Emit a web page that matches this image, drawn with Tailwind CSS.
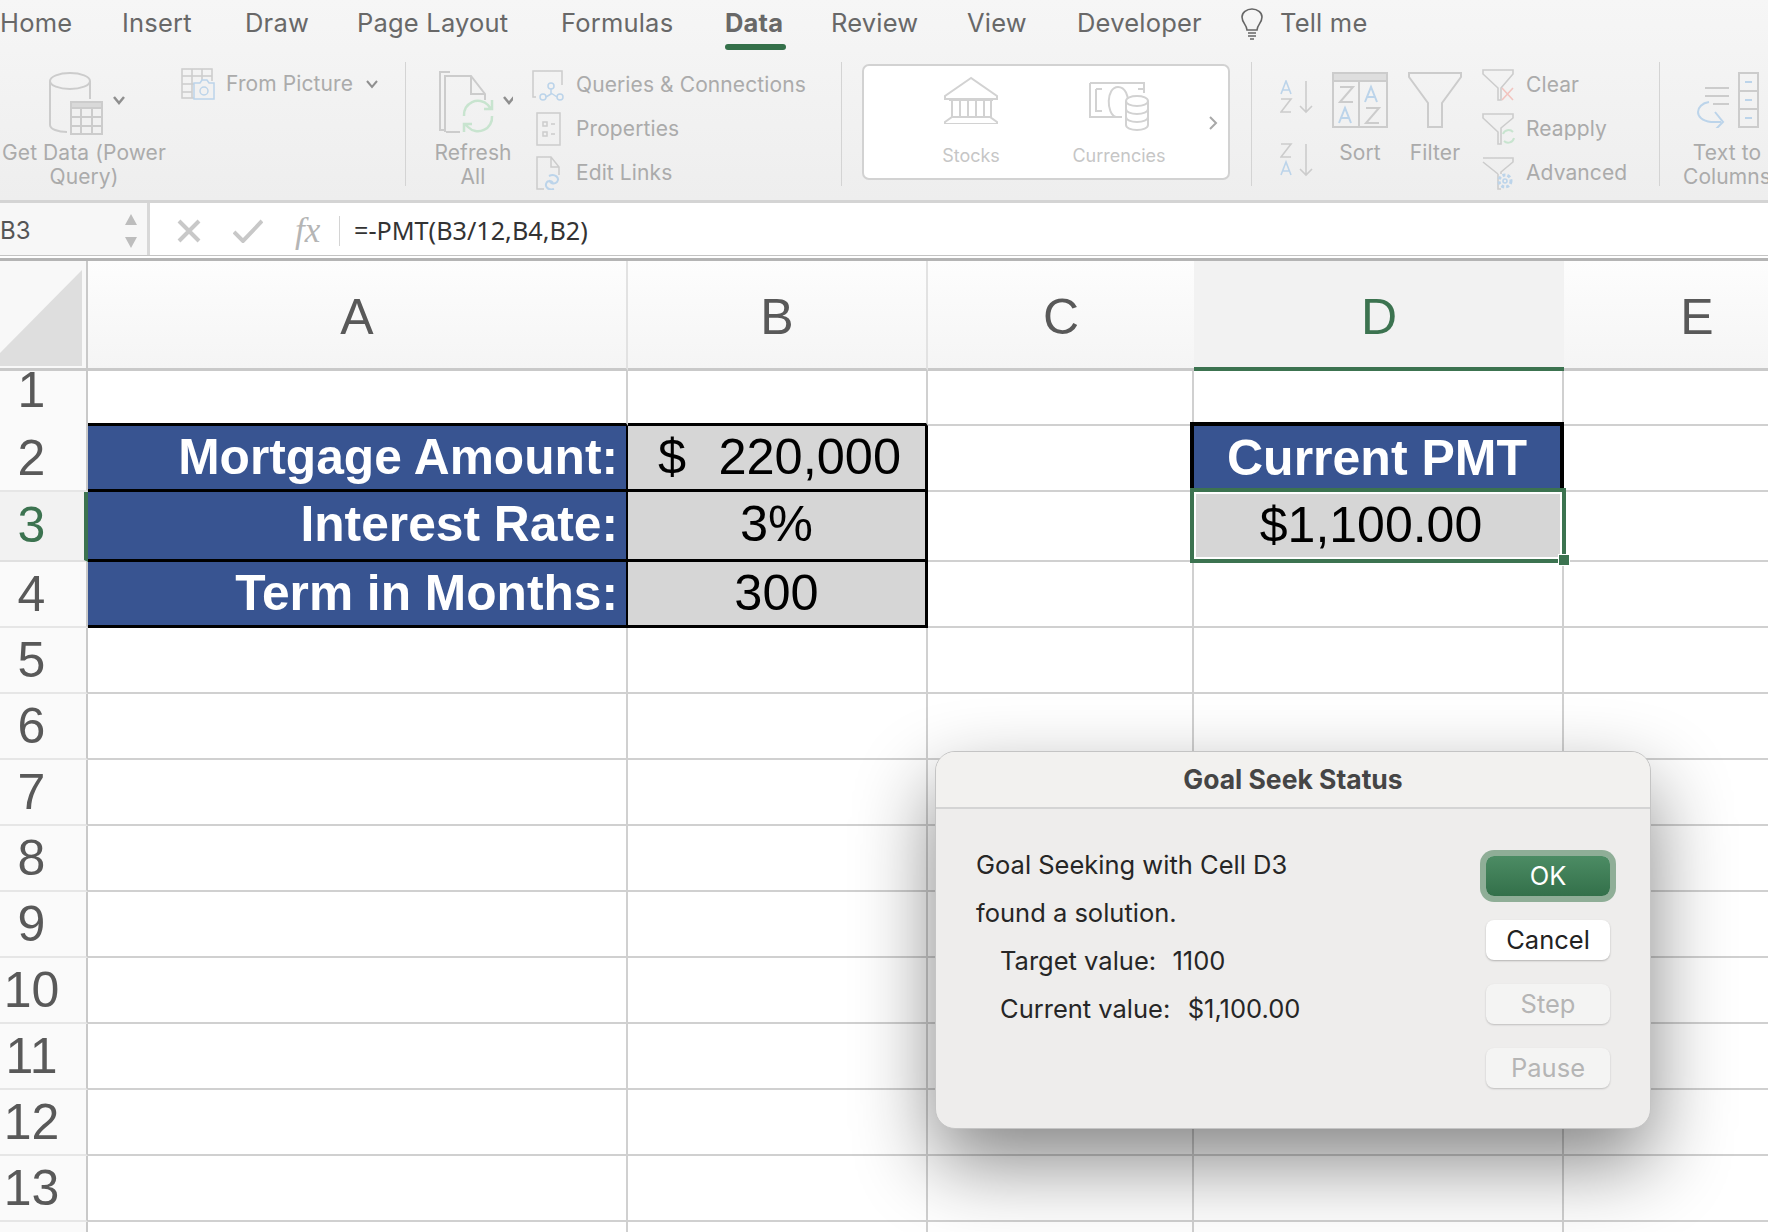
<!doctype html>
<html><head><meta charset="utf-8"><script src="https://cdn.jsdelivr.net/npm/@tailwindcss/browser@4"></script></head>
<body class="w-[1768px] h-[1232px] overflow-hidden bg-white relative font-['Inter',sans-serif]">

<!-- ribbon -->
<div class="h-[203px] bg-gradient-to-b from-[#f6f6f6] to-[#eeeeee] border-b-[3px] border-[#d4d4d4]">
  <div class="h-[50px] flex items-start text-[25.5px] text-[#686868] leading-[46px] whitespace-nowrap tracking-[0.2px]">
    <div class="w-[122px]">Home</div>
    <div class="w-[123px]">Insert</div>
    <div class="w-[112px]">Draw</div>
    <div class="w-[204px]">Page Layout</div>
    <div class="w-[164px]">Formulas</div>
    <div class="w-[106px] font-bold relative">Data<div class="absolute left-0 top-[44px] w-[61px] h-[6px] rounded-full bg-[#34704a]"></div></div>
    <div class="w-[136px]">Review</div>
    <div class="w-[110px]">View</div>
    <div class="w-[163px]">Developer</div>
    <svg class="mt-[8px] w-[24px] h-[32px]" viewBox="0 0 24 32" fill="none" stroke="#666" stroke-width="1.6"><path d="M7 22c0-5-5-7-5-13a10 8 0 0 1 20 0c0 6-5 8-5 13z"/><path d="M8 25h8M8 28h8M10 31h4"/></svg>
    <div class="ml-[16px]">Tell me</div>
  </div>
  <div class="flex items-start h-[150px] text-[21px] tracking-[0.1px] text-[#ababab] whitespace-nowrap leading-[24px]">
    <!-- group 1 -->
    <div class="w-[405px] shrink-0 flex items-start">
      <div class="w-[168px] flex flex-col items-center pt-[20px]">
        <svg class="ml-[3px] w-[84px] h-[66px]" viewBox="0 0 84 66" fill="none" stroke="#cccccc" stroke-width="2"><ellipse cx="26" cy="11" rx="20" ry="8"/><path d="M6 11v44c0 4 8 7 17 7M46 11v18"/><path fill="#f1f1f1" d="M27 32h31v32H27z"/><path fill="#d9d9d9" d="M27 32h31v6H27z"/><path d="M37 38v26M48 38v26M27 47h31M27 56h31"/><path stroke="#8f8f8f" stroke-width="2.5" d="M70 27l5 6 5-6"/></svg>
        <div class="mt-[5px] text-center">Get Data (Power<br>Query)</div>
      </div>
      <div class="flex items-center pt-[18px] pl-[13px]">
        <svg class="w-[34px] h-[32px]" viewBox="0 0 34 32" fill="none" stroke="#cccccc" stroke-width="1.5"><path d="M14 30H1V1h30v12M1 8h30M1 16h14M1 24h10M11 1v29M21 1v12"/><path stroke="#bcd4ea" fill="#f1f1f1" d="M13 15h6l2-3h5l2 3h5v16H13z"/><circle cx="23" cy="23" r="4" stroke="#bcd4ea"/></svg>
        <span class="ml-[11px]">From Picture</span>
        <svg class="ml-[12px] w-[14px] h-[10px]" viewBox="0 0 14 10" fill="none" stroke="#8f8f8f" stroke-width="2"><path d="M2 2l5 6 5-6"/></svg>
      </div>
    </div>
    <div class="w-px shrink-0 h-[124px] mt-[12px] bg-[#d4d4d4]"></div>
    <!-- group 2 -->
    <div class="w-[435px] shrink-0 flex items-start">
      <div class="w-[126px] pl-[14px] pr-[6px] flex flex-col items-center pt-[20px]">
        <svg class="w-[80px] h-[66px]" viewBox="0 0 80 66" fill="none" stroke="#cccccc" stroke-width="2"><path d="M17 2H7v58h6"/><path d="M12 62V6h26l14 18v6M13 62h14M38 6v18h14"/><path stroke="#c8e4cf" stroke-width="2.5" d="M31 46a14 14 0 0 1 24-11l3 4M59 46a14 14 0 0 1-24 11l-3-3M59 30v9h-8M31 62v-8h8"/><path stroke="#8f8f8f" stroke-width="2.5" d="M71 27l5 6 5-6"/></svg>
        <div class="mt-[5px] text-center">Refresh<br>All</div>
      </div>
      <div class="flex flex-col pt-[13px]">
        <div class="h-[44px] flex items-center"><svg class="w-[32px] h-[32px]" viewBox="0 0 32 32" fill="none" stroke="#cccccc" stroke-width="1.5"><path d="M4 28H1V2h29v14"/><circle cx="19" cy="17" r="3" stroke="#bcd4ea"/><circle cx="11" cy="28" r="3" stroke="#bcd4ea"/><circle cx="28" cy="28" r="3" stroke="#bcd4ea"/><path stroke="#bcd4ea" d="M19 20v5l-5 3M19 24l6 4"/></svg><span class="ml-[12px]">Queries &amp; Connections</span></div>
        <div class="h-[44px] flex items-center"><svg class="w-[32px] h-[34px]" viewBox="0 0 32 34" fill="none" stroke="#cccccc" stroke-width="1.5"><path d="M5 1h23v32H5z"/><path d="M11 10h4v4h-4zM11 20h4v4h-4zM19 12h4M19 22h4"/></svg><span class="ml-[12px]">Properties</span></div>
        <div class="h-[44px] flex items-center"><svg class="w-[32px] h-[34px]" viewBox="0 0 32 34" fill="none" stroke="#cccccc" stroke-width="1.5"><path d="M12 33H5V1h14l8 10v8M19 1v10h8"/><path stroke="#bcd4ea" stroke-width="2" d="M17 20c6-3 11 2 8 6-3 3-8 1-7-2M22 33c-6 2-10-3-7-7 2-2 6-1 6 2"/></svg><span class="ml-[12px]">Edit Links</span></div>
      </div>
    </div>
    <div class="w-px shrink-0 h-[124px] mt-[12px] bg-[#d4d4d4]"></div>
    <!-- group 3 -->
    <div class="w-[409px] shrink-0 pl-[20px] pt-[14px]">
      <div class="w-[368px] h-[116px] bg-white border-2 border-[#d2d2d2] rounded-[7px] flex items-start text-[18px] tracking-normal text-[#c6c6c6]">
        <div class="w-[214px] flex flex-col items-center pt-[10px]">
          <svg class="w-[56px] h-[48px]" viewBox="0 0 56 48" fill="none" stroke="#d2d2d2" stroke-width="2"><path d="M28 2L2 20v3h52v-3zM6 24h44M9 24v17M17 24v17M25 24v17M33 24v17M41 24v17M48 24v17"/><path d="M9 41h38l7 5v2H2v-2z"/></svg>
          <div class="mt-[20px]">Stocks</div>
        </div>
        <div class="w-[110px] flex flex-col items-center pt-[15px] -ml-[14px]">
          <svg class="w-[62px] h-[50px]" viewBox="0 0 62 50" fill="none" stroke="#d2d2d2" stroke-width="2"><path d="M2 2h54v10M2 2v34h32M8 8v22h6M8 8h6M50 8h6M28 36c-10-3-10-30 2-30 8 0 10 10 10 14"/><path fill="#fff" d="M38 20c0-3 5-5 11-5s11 2 11 5v24c0 3-5 5-11 5s-11-2-11-5z"/><path d="M38 20c0 3 5 5 11 5s11-2 11-5M38 28c0 3 5 5 11 5s11-2 11-5M38 36c0 3 5 5 11 5s11-2 11-5"/></svg>
          <div class="mt-[13px] whitespace-nowrap">Currencies</div>
        </div>
        <svg class="mt-[50px] ml-[34px] w-[10px] h-[14px]" viewBox="0 0 10 14" fill="none" stroke="#a8a8a8" stroke-width="2"><path d="M2 1l6 6-6 6"/></svg>
      </div>
    </div>
    <div class="w-px shrink-0 h-[124px] mt-[12px] bg-[#d4d4d4]"></div>
    <!-- group 4 -->
    <div class="w-[407px] shrink-0 flex items-start">
      <div class="pl-[28px] w-[80px] pt-[30px] flex flex-col gap-[29px]">
        <svg class="w-[34px] h-[34px]" viewBox="0 0 34 34" fill="none" stroke-width="1.6"><path stroke="#bcd4ea" d="M1 14L6 1l5 13M3 10h6"/><path stroke="#cccccc" d="M1 19h10L1 32h10M26 1v31M20 26l6 6 6-6"/></svg>
        <svg class="w-[34px] h-[34px]" viewBox="0 0 34 34" fill="none" stroke-width="1.6"><path stroke="#cccccc" d="M1 1h10L1 14h10M26 1v31M20 26l6 6 6-6"/><path stroke="#bcd4ea" d="M1 32l5-13 5 13M3 28h6"/></svg>
      </div>
      <div class="w-[76px] pt-[22px] flex flex-col items-start">
        <svg class="w-[56px] h-[56px]" viewBox="0 0 56 56" fill="none" stroke="#cccccc" stroke-width="2"><path d="M1 1h54v54H1z"/><path fill="#dedede" d="M1 1h54v8H1z"/><path d="M27 9v46M8 15h13L8 30h13"/><path stroke="#bcd4ea" d="M33 30l6-15 6 15M35 25h8M7 51l6-15 6 15M9 46h8"/><path d="M34 36h13L34 51h13"/></svg>
        <div class="mt-[13px] w-[56px] text-center">Sort</div>
      </div>
      <div class="w-[74px] pt-[22px] flex flex-col items-start">
        <svg class="w-[54px] h-[56px]" viewBox="0 0 54 56" fill="none" stroke="#cccccc" stroke-width="2"><path d="M1 1h52v4L34 31v24H20V31L1 5z"/></svg>
        <div class="mt-[13px] w-[54px] text-center">Filter</div>
      </div>
      <div class="flex flex-col pt-[13px]">
        <div class="h-[44px] flex items-center"><svg class="w-[33px] h-[34px]" viewBox="0 0 33 34" fill="none" stroke="#cccccc" stroke-width="1.6"><path d="M1 2h30v4L19 20v12h-3V20L1 6z"/><path stroke="#f2c4bf" d="M20 20l11 12M31 20L20 32"/></svg><span class="ml-[11px]">Clear</span></div>
        <div class="h-[44px] flex items-center"><svg class="w-[33px] h-[34px]" viewBox="0 0 33 34" fill="none" stroke="#cccccc" stroke-width="1.6"><path d="M1 2h30v4L19 16v16h-3V20L1 6z"/><path stroke="#c8e4cf" stroke-width="2" d="M21 22a6 6 0 0 1 10-2M32 26a6 6 0 0 1-10 3"/></svg><span class="ml-[11px]">Reapply</span></div>
        <div class="h-[44px] flex items-center"><svg class="w-[33px] h-[34px]" viewBox="0 0 33 34" fill="none" stroke="#cccccc" stroke-width="1.6"><path d="M1 2h30v4L19 16v2M16 18L1 6M16 18v15h3"/><circle cx="23" cy="25" r="6" stroke="#bcd4ea" stroke-width="3" stroke-dasharray="3 2"/><circle cx="23" cy="25" r="2" stroke="#bcd4ea"/></svg><span class="ml-[11px]">Advanced</span></div>
      </div>
    </div>
    <div class="w-px shrink-0 h-[124px] mt-[12px] bg-[#d4d4d4]"></div>
    <!-- group 5 -->
    <div class="w-[134px] shrink-0 flex flex-col items-center pt-[22px]">
      <svg class="w-[64px] h-[56px]" viewBox="0 0 64 56" fill="none" stroke="#cccccc" stroke-width="2"><path d="M10 16h24M10 24h24M18 32h16"/><path d="M44 1h19v54H44zM44 19h19M44 37h19"/><path stroke="#bcd4ea" d="M50 10h7M50 28h7M50 46h7M14 30C0 32-2 48 16 50h10M20 40l8 10-8 8"/></svg>
      <div class="mt-[13px] text-center">Text to<br>Columns</div>
    </div>
  </div>
</div>

<!-- formula bar -->
<div class="h-[58px] flex border-b-[3px] border-[#b4b4b4] relative">
  <div class="w-[147px] h-[52px] pt-[3px] bg-[#f7f7f7] flex items-center justify-between pr-[9px] text-[24px] text-[#555]">
    <span>B3</span>
    <svg class="w-[14px] h-[36px]" viewBox="0 0 14 36" fill="#bdbdbd"><path d="M7 1l6 11H1zM7 35l6-11H1z"/></svg>
  </div>
  <div class="w-[3px] h-[52px] bg-[#d8d8d8]"></div>
  <div class="flex items-center h-[52px] pt-[3px] pl-[27px] bg-white flex-1">
    <svg class="w-[24px] h-[24px]" viewBox="0 0 24 24" stroke="#c8c8c8" stroke-width="4"><path d="M2 2l20 20M22 2L2 22"/></svg>
    <svg class="ml-[32px] w-[30px] h-[24px]" viewBox="0 0 30 24" fill="none" stroke="#c8c8c8" stroke-width="4"><path d="M1 13l9 9L29 2"/></svg>
    <span class="ml-[32px] w-[30px] font-['Liberation_Serif',serif] italic text-[35px] leading-none text-[#b5b5b5]">fx</span>
    <div class="ml-[14px] w-px h-[30px] bg-[#d4d4d4]"></div>
    <span class="ml-[14px] text-[25.2px] text-[#333] font-['Noto_Sans',sans-serif]">=-PMT(B3/12,B4,B2)</span>
  </div>
  <div class="absolute left-0 right-0 bottom-[2px] h-px bg-[#c4c4c4]"></div>
</div>

<!-- sheet -->
<div class="w-[1830px] grid grid-cols-[88px_540px_300px_266px_370px_266px] grid-rows-[110px_55px_66px_70px] auto-rows-[66px] font-['Liberation_Sans',Arial,sans-serif] text-[#595959] text-[50px] leading-none">
  <!-- header -->
  <div class="bg-[#f8f8f8] border-r-2 border-b-[3px] border-[#c9c9c9]"><svg class="w-[85px] h-[107px]" viewBox="0 0 85 107"><path fill="#dedede" d="M82 9v96H0V92z"/></svg></div>
  <div class="flex items-center justify-center pt-[5px] bg-gradient-to-b from-[#fdfdfd] to-[#f5f5f5] border-r-2 border-b-[3px] border-r-[#e2e2e2] border-b-[#c9c9c9]">A</div>
  <div class="flex items-center justify-center pt-[5px] bg-gradient-to-b from-[#fdfdfd] to-[#f5f5f5] border-r-2 border-b-[3px] border-r-[#e2e2e2] border-b-[#c9c9c9]">B</div>
  <div class="flex items-center justify-center pt-[5px] bg-gradient-to-b from-[#fdfdfd] to-[#f5f5f5] border-b-[3px] border-b-[#c9c9c9]">C</div>
  <div class="flex items-center justify-center pt-[5px] bg-[#f2f2f2] border-b-4 border-[#3c7350] text-[#3c7350]">D</div>
  <div class="flex items-center justify-center pt-[5px] bg-gradient-to-b from-[#fdfdfd] to-[#f5f5f5] border-b-[3px] border-b-[#c9c9c9]">E</div>
  <!-- 1 -->
  <div class="bg-[#fafafa] border-r-2 border-[#c9c9c9] flex justify-center pr-[23px]"><span class="-mt-[6px]">1</span></div>
  <div class="border-r-2 border-r-[#d0d0d0] border-b-[3px] border-b-black"></div>
  <div class="border-r-2 border-r-[#d0d0d0] border-b-[3px] border-b-black"></div>
  <div class="border-r-2 border-b-2 border-[#d0d0d0]"></div>
  <div class="border-r-2 border-b-2 border-[#d0d0d0]"></div>
  <div class="border-b-2 border-[#d0d0d0]"></div>
  <!-- 2 -->
  <div class="bg-[#fafafa] border-r-2 border-b-2 border-r-[#c9c9c9] border-b-[#e6e6e6] flex items-center justify-center pr-[23px]">2</div>
  <div class="bg-[#385491] border-r-2 border-b-[3px] border-black flex items-center justify-end pr-[8px] text-white font-bold text-[49.7px]">Mortgage Amount:</div>
  <div class="bg-[#d6d6d6] border-r-[3px] border-b-[3px] border-black flex items-center justify-between pl-[30px] pr-[24px] text-black text-[50.5px]"><span>$</span><span>220,000</span></div>
  <div class="border-r-2 border-b-2 border-[#d0d0d0]"></div>
  <div class="relative border-b-2 border-[#d0d0d0]"><div class="absolute -top-[4px] -left-[4px] w-[374px] h-[70px] bg-[#385491] border-4 border-b-0 border-black flex items-center justify-center text-white font-bold text-[50px] pb-[3px]">Current PMT</div></div>
  <div class="border-b-2 border-[#d0d0d0]"></div>
  <!-- 3 -->
  <div class="bg-[#f2f2f2] border-r-[4px] border-b-2 border-r-[#3c7350] border-b-[#e0e0e0] flex items-center justify-center pr-[21px] pb-[2px] text-[#3c7350]">3</div>
  <div class="bg-[#385491] border-r-2 border-b-[3px] border-black flex items-center justify-end pr-[8px] pb-[2px] text-white font-bold text-[49.7px]">Interest Rate:</div>
  <div class="bg-[#d6d6d6] border-r-[3px] border-b-[3px] border-black flex items-center justify-center pb-[2px] text-black text-[50.5px]">3%</div>
  <div class="border-r-2 border-b-2 border-[#d0d0d0]"></div>
  <div class="relative border-b-2 border-[#d0d0d0]"><div class="absolute -top-[4px] -left-[4px] w-[376px] h-[75px] border-4 border-[#3c7350] bg-white p-[2px]"><div class="h-full bg-[#d6d6d6] flex items-center justify-center pr-[14px] pb-[2px] text-black text-[50px]">$1,100.00</div></div><div class="absolute -right-[6px] -bottom-[6px] w-[12px] h-[12px] bg-[#3c7350] border border-white"></div></div>
  <div class="border-b-2 border-[#d0d0d0]"></div>
  <!-- 4 -->
  <div class="bg-[#fafafa] border-r-2 border-b-2 border-r-[#c9c9c9] border-b-[#e6e6e6] flex items-center justify-center pr-[23px]">4</div>
  <div class="bg-[#385491] border-r-2 border-b-[3px] border-black flex items-center justify-end pr-[8px] text-white font-bold text-[49.7px]">Term in Months:</div>
  <div class="bg-[#d6d6d6] border-r-[3px] border-b-[3px] border-black flex items-center justify-center text-black text-[50.5px]">300</div>
  <div class="border-r-2 border-b-2 border-[#d0d0d0]"></div>
  <div class="border-r-2 border-b-2 border-[#d0d0d0]"></div>
  <div class="border-b-2 border-[#d0d0d0]"></div>
  <!-- 5 -->
  <div class="bg-[#fafafa] border-r-2 border-b-2 border-r-[#c9c9c9] border-b-[#e6e6e6] flex items-center justify-center pr-[23px]">5</div>
  <div class="border-r-2 border-b-2 border-[#d0d0d0]"></div><div class="border-r-2 border-b-2 border-[#d0d0d0]"></div><div class="border-r-2 border-b-2 border-[#d0d0d0]"></div><div class="border-r-2 border-b-2 border-[#d0d0d0]"></div><div class="border-b-2 border-[#d0d0d0]"></div>
  <!-- 6 -->
  <div class="bg-[#fafafa] border-r-2 border-b-2 border-r-[#c9c9c9] border-b-[#e6e6e6] flex items-center justify-center pr-[23px]">6</div>
  <div class="border-r-2 border-b-2 border-[#d0d0d0]"></div><div class="border-r-2 border-b-2 border-[#d0d0d0]"></div><div class="border-r-2 border-b-2 border-[#d0d0d0]"></div><div class="border-r-2 border-b-2 border-[#d0d0d0]"></div><div class="border-b-2 border-[#d0d0d0]"></div>
  <!-- 7 -->
  <div class="bg-[#fafafa] border-r-2 border-b-2 border-r-[#c9c9c9] border-b-[#e6e6e6] flex items-center justify-center pr-[23px]">7</div>
  <div class="border-r-2 border-b-2 border-[#d0d0d0]"></div><div class="border-r-2 border-b-2 border-[#d0d0d0]"></div><div class="border-r-2 border-b-2 border-[#d0d0d0]"></div><div class="border-r-2 border-b-2 border-[#d0d0d0]"></div><div class="border-b-2 border-[#d0d0d0]"></div>
  <!-- 8 -->
  <div class="bg-[#fafafa] border-r-2 border-b-2 border-r-[#c9c9c9] border-b-[#e6e6e6] flex items-center justify-center pr-[23px]">8</div>
  <div class="border-r-2 border-b-2 border-[#d0d0d0]"></div><div class="border-r-2 border-b-2 border-[#d0d0d0]"></div><div class="border-r-2 border-b-2 border-[#d0d0d0]"></div><div class="border-r-2 border-b-2 border-[#d0d0d0]"></div><div class="border-b-2 border-[#d0d0d0]"></div>
  <!-- 9 -->
  <div class="bg-[#fafafa] border-r-2 border-b-2 border-r-[#c9c9c9] border-b-[#e6e6e6] flex items-center justify-center pr-[23px]">9</div>
  <div class="border-r-2 border-b-2 border-[#d0d0d0]"></div><div class="border-r-2 border-b-2 border-[#d0d0d0]"></div><div class="border-r-2 border-b-2 border-[#d0d0d0]"></div><div class="border-r-2 border-b-2 border-[#d0d0d0]"></div><div class="border-b-2 border-[#d0d0d0]"></div>
  <!-- 10 -->
  <div class="bg-[#fafafa] border-r-2 border-b-2 border-r-[#c9c9c9] border-b-[#e6e6e6] flex items-center justify-center pr-[23px]">10</div>
  <div class="border-r-2 border-b-2 border-[#d0d0d0]"></div><div class="border-r-2 border-b-2 border-[#d0d0d0]"></div><div class="border-r-2 border-b-2 border-[#d0d0d0]"></div><div class="border-r-2 border-b-2 border-[#d0d0d0]"></div><div class="border-b-2 border-[#d0d0d0]"></div>
  <!-- 11 -->
  <div class="bg-[#fafafa] border-r-2 border-b-2 border-r-[#c9c9c9] border-b-[#e6e6e6] flex items-center justify-center pr-[23px]">11</div>
  <div class="border-r-2 border-b-2 border-[#d0d0d0]"></div><div class="border-r-2 border-b-2 border-[#d0d0d0]"></div><div class="border-r-2 border-b-2 border-[#d0d0d0]"></div><div class="border-r-2 border-b-2 border-[#d0d0d0]"></div><div class="border-b-2 border-[#d0d0d0]"></div>
  <!-- 12 -->
  <div class="bg-[#fafafa] border-r-2 border-b-2 border-r-[#c9c9c9] border-b-[#e6e6e6] flex items-center justify-center pr-[23px]">12</div>
  <div class="border-r-2 border-b-2 border-[#d0d0d0]"></div><div class="border-r-2 border-b-2 border-[#d0d0d0]"></div><div class="border-r-2 border-b-2 border-[#d0d0d0]"></div><div class="border-r-2 border-b-2 border-[#d0d0d0]"></div><div class="border-b-2 border-[#d0d0d0]"></div>
  <!-- 13 -->
  <div class="bg-[#fafafa] border-r-2 border-b-2 border-r-[#c9c9c9] border-b-[#e6e6e6] flex items-center justify-center pr-[23px]">13</div>
  <div class="border-r-2 border-b-2 border-[#d0d0d0]"></div><div class="border-r-2 border-b-2 border-[#d0d0d0]"></div><div class="border-r-2 border-b-2 border-[#d0d0d0]"></div><div class="border-r-2 border-b-2 border-[#d0d0d0]"></div><div class="border-b-2 border-[#d0d0d0]"></div>
  <!-- 14 -->
  <div class="bg-[#fafafa] border-r-2 border-[#c9c9c9]"></div>
  <div class="border-r-2 border-[#d0d0d0]"></div><div class="border-r-2 border-[#d0d0d0]"></div><div class="border-r-2 border-[#d0d0d0]"></div><div class="border-r-2 border-[#d0d0d0]"></div><div></div>
</div>

<!-- dialog -->
<div class="absolute left-[935px] top-[751px] w-[716px] h-[378px] rounded-[20px] bg-[#eeedec] border border-[#c4c4c4] shadow-[0_34px_80px_rgba(0,0,0,0.48)] overflow-hidden text-[25.5px] text-[#262626]">
  <div class="h-[57px] bg-[#f2f1ef] border-b-2 border-[#d4d4d4] flex items-center justify-center font-bold text-[26.5px] text-[#454545]">Goal Seek Status</div>
  <div class="flex justify-between pl-[40px] pr-[40px]">
    <div class="pt-[32px] leading-[48px]">
      <div>Goal Seeking with Cell D3</div>
      <div>found a solution.</div>
      <div class="pl-[24px] whitespace-pre">Target value:  <span class="ml-[2px]">1100</span></div>
      <div class="pl-[24px] whitespace-pre">Current value:  <span class="ml-[3px]">$1,100.00</span></div>
    </div>
    <div class="pt-[47px] flex flex-col gap-[24px] w-[124px] text-center leading-[40px]">
      <div class="h-[40px] rounded-[8px] bg-gradient-to-b from-[#4c8c64] to-[#33704a] text-white ring-[6px] ring-[#8fae97]">OK</div>
      <div class="h-[40px] rounded-[8px] bg-white text-[#222] shadow-[0_1px_2px_rgba(0,0,0,0.25)]">Cancel</div>
      <div class="h-[40px] rounded-[8px] bg-[#f4f4f3] text-[#b5b5b5] shadow-[0_1px_2px_rgba(0,0,0,0.2)]">Step</div>
      <div class="h-[40px] rounded-[8px] bg-[#f4f4f3] text-[#b5b5b5] shadow-[0_1px_2px_rgba(0,0,0,0.2)]">Pause</div>
    </div>
  </div>
</div>
</body></html>
